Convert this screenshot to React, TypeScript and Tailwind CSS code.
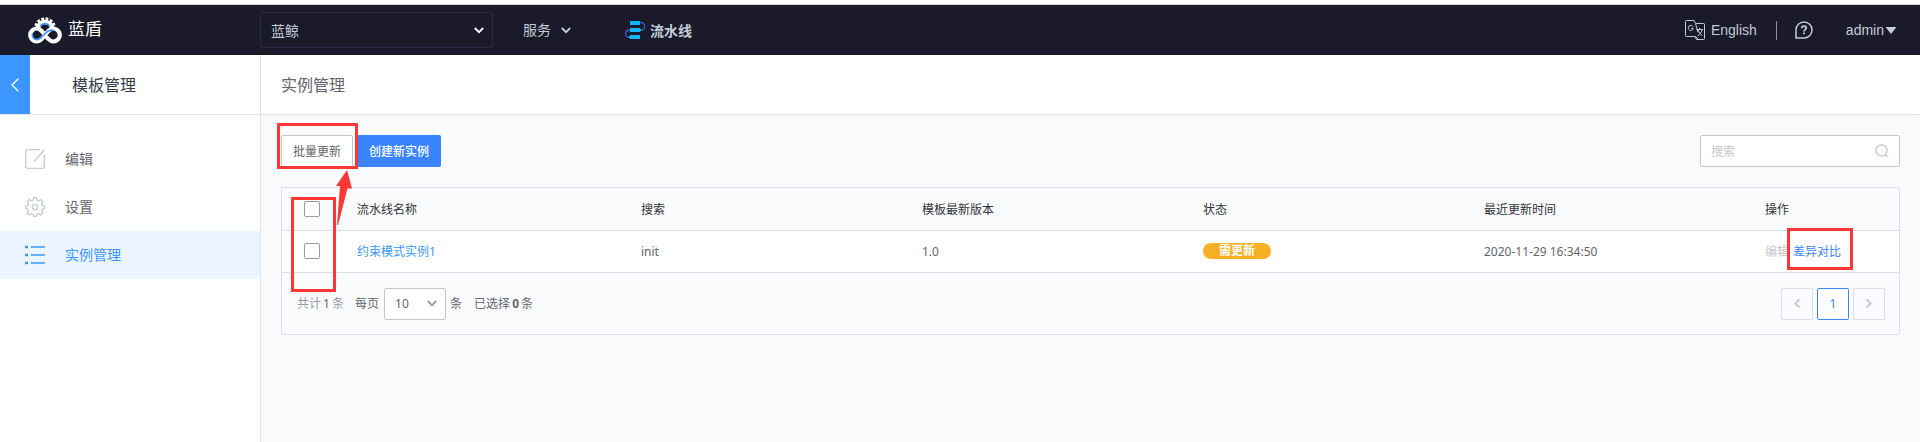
import React from "react";

const columns = ["流水线名称", "搜索", "模板最新版本", "状态", "最近更新时间", "操作"];
const grid = "grid grid-cols-[60px_284px_281px_281px_281px_281px_1fr]";

function Chevron({ className }: { className: string }) {
  return (
    <svg className={className} viewBox="0 0 10 7" fill="none" stroke="currentColor" strokeWidth="1.8">
      <path d="M0.8 1l4.2 4.2L9.2 1" />
    </svg>
  );
}

function Logo() {
  return (
    <svg className="h-[28px] w-[34px] shrink-0" viewBox="0 0 34 28" fill="none">
      <path d="M10 11.500A7.200 7.200 0 0 1 24 11.500" stroke="#fff" strokeWidth="4.400" />
      <path d="M8 10A9.300 9.300 0 0 1 26 10" stroke="#fff" strokeWidth="3.400" strokeDasharray="2.700 1.500" />
      <path d="M12.300 10A5.800 5.800 0 0 1 21.700 10" stroke="#3c96ff" strokeWidth="1.700" />
      <path
        d="M17 19C14 15 12 12.500 8.700 12.500A6.500 6.500 0 0 0 8.700 25.500C12 25.500 14 23 17 19C20 15 22 12.500 25.300 12.500A6.500 6.500 0 0 1 25.300 25.500C22.500 25.500 20.500 23.500 18 20.500"
        stroke="#fff"
        strokeWidth="4.200"
      />
      <path
        d="M4.500 17.500C3.800 21.500 6.300 23.600 8.800 23.600C12.500 23.600 14.500 20 17.500 17C20.300 14.200 23 13.600 26 14.500"
        stroke="#3c96ff"
        strokeWidth="1.700"
      />
    </svg>
  );
}

function Header() {
  return (
    <header className="flex h-[51px] items-center border-t border-[#d4d4d6] bg-[#1b1a2a] text-sm text-[#c3cdd7]">
      <div className="flex w-[260px] items-center pl-[28px] text-white">
        <Logo />
        <span className="ml-[6px] text-[17px] leading-[24px]">蓝盾</span>
      </div>
      <div className="flex h-[36px] w-[233px] items-center justify-between rounded-[2px] border border-[#2a2a42] pr-[8px] pl-[10px]">
        <span className="pt-px">蓝鲸</span>
        <Chevron className="h-[7px] w-[10px] text-white" />
      </div>
      <div className="ml-[30px] flex items-center">
        <span>服务</span>
        <Chevron className="ml-[10px] h-[7px] w-[10px]" />
      </div>
      <div className="ml-[54px] flex items-center font-bold">
        <svg className="mr-[5px] h-[20px] w-[20px]" viewBox="0 0 20 20" fill="none">
          <path d="M15 2.700h1a3.700 3.700 0 0 1 0 7.400h-1M5 10H4.300a3.700 3.700 0 0 0 0 7.400H5" stroke="#3a5fd0" strokeWidth="1.300" />
          <path d="M5 1h10v4H5zM5 8h10v4H5zM5 15h10v4H5z" fill="#0fb4ff" />
          <path d="M15 9.300h1v1.500h-1zM4 16.500h1V18H4z" fill="#38f2b0" />
        </svg>
        <span className="pt-px">流水线</span>
      </div>
      <div className="ml-auto flex items-center pr-[23px]">
        <svg className="h-[20px] w-[20px]" viewBox="0 0 20 20" fill="none" stroke="currentColor">
          <path d="M10 16.500H1.500Q.5 16.500.5 15.500V1.500Q.5.500 1.500.500H9L10.500 3.500H18.500Q19.500 3.500 19.500 4.500V18.500Q19.500 19.500 18.500 19.500H11.500L10 16.500M10.500 3.500L13 12.500M10.500 16.500L13 19" />
          <path d="M8 6.800A2.500 2.500 0 1 0 8.200 8.500H6.200M11.500 9.500h6.500M14.500 8v1.500M17 9.500c-.5 3-2 5-4.500 6.500M13 9.500c1 3 2.500 5 4.500 6" />
        </svg>
        <span className="ml-[6px]">English</span>
        <span className="ml-[19px] h-[19px] w-px bg-[#8b929c]" />
        <svg className="ml-[18px] h-[18px] w-[18px]" viewBox="0 0 18 18" fill="none" stroke="currentColor" strokeWidth="1.500">
          <path d="M1 17V9a8 8 0 1 1 8 8z" />
          <path d="M6.800 7.300C6.800 4.300 11.200 4.400 11.200 7c0 1.700-2.200 1.600-2.200 3.400M9 11.500v1.700" strokeWidth="1.800" />
        </svg>
        <span className="ml-[33px]">admin</span>
        <svg className="ml-[1px] h-[7px] w-[12px]" viewBox="0 0 12 7" fill="currentColor">
          <path d="M0.500 0h11L6 7z" />
        </svg>
      </div>
    </header>
  );
}

function NavItem({ label, active, children }: { label: string; active?: boolean; children: React.ReactNode }) {
  return (
    <li className={active ? "flex h-[48px] items-center bg-[#ebf4ff] pl-[25px] text-[#3c96ff]" : "flex h-[48px] items-center pl-[25px] text-[#63656e]"}>
      <svg
        className={active ? "mr-[20px] h-[20px] w-[20px]" : "mr-[20px] h-[20px] w-[20px] text-[#c3cdd7]"}
        viewBox="0 0 20 20"
        fill="none"
        stroke="currentColor"
        strokeWidth="1.300"
      >
        {children}
      </svg>
      {label}
    </li>
  );
}

function Sidebar() {
  return (
    <aside className="w-[261px] shrink-0 border-r border-[#dde4eb] bg-white">
      <div className="flex h-[60px] border-b border-[#dde4eb]">
        <div className="flex h-[59px] w-[30px] items-center justify-center bg-[#3c96ff] text-white">
          <svg className="h-[14px] w-[8px]" viewBox="0 0 8 14" fill="none" stroke="currentColor" strokeWidth="1.300">
            <path d="M7.300.7L1 7l6.300 6.300" />
          </svg>
        </div>
        <span className="ml-[42px] text-base leading-[60px] text-[#333c48]">模板管理</span>
      </div>
      <ul className="pt-[20px] text-sm">
        <NavItem label="编辑">
          <path d="M14.500.7H2.500Q.7.700.7 2.500v15q0 1.800 1.800 1.800h15q1.800 0 1.800-1.800V6M19.500.7L9 12.500" />
        </NavItem>
        <NavItem label="设置">
          <path d="M8.600.7h2.800l.5 2.300 1.900.8 2-1.300 2 2-1.300 2 .8 1.900 2.100.5v2.600l-2.100.5-.8 1.900 1.300 2-2 2-2-1.300-1.900.8-.5 1.900H8.600l-.5-1.900-1.900-.8-2 1.300-2-2 1.300-2-.8-1.900L.6 11.500V8.900l2.100-.5.800-1.900-1.300-2 2-2 2 1.300 1.900-.8z" />
          <circle cx="10" cy="10" r="2.700" />
        </NavItem>
        <NavItem label="实例管理" active>
          <path d="M6 2h14M6 10h14M6 18h14" />
          <path d="M0 2h3M0 10h3M0 18h3" strokeWidth="2.600" />
        </NavItem>
      </ul>
    </aside>
  );
}

function Checkbox() {
  return <span className="ml-[22px] block h-[16px] w-[16px] rounded-[2px] border border-[#979ba5] bg-white" />;
}

function PageButton({ children, active }: { children: React.ReactNode; active?: boolean }) {
  return (
    <span
      className={
        active
          ? "flex h-[32px] w-[32px] items-center justify-center rounded-[2px] border border-[#3a84ff] bg-white text-[#3a84ff]"
          : "flex h-[32px] w-[32px] items-center justify-center rounded-[2px] border border-[#dcdee5] text-[#c4c6cc]"
      }
    >
      {children}
    </span>
  );
}

function InstanceTable() {
  return (
    <section className="mt-[20px] h-[148px] rounded-[2px] border border-[#dcdee5] text-xs text-[#63656e]">
      <div className={`${grid} h-[43px] items-center border-b border-[#dcdee5] text-[#313238]`}>
        <span className="pb-px"><Checkbox /></span>
        {columns.map((c) => (
          <span key={c} className="pt-px pl-[15px]">{c}</span>
        ))}
      </div>
      <div className={`${grid} h-[42px] items-center border-b border-[#dcdee5] bg-white`}>
        <span className="pb-px"><Checkbox /></span>
        <span className="pl-[15px] text-[#3c96ff]">约束模式实例1</span>
        <span className="pl-[15px]">init</span>
        <span className="pl-[15px]">1.0</span>
        <span className="pb-px pl-[15px]">
          <span className="flex h-[16px] w-[68px] items-center justify-center rounded-full bg-[#f6b026] font-bold text-white">需更新</span>
        </span>
        <span className="pl-[15px]">2020-11-29 16:34:50</span>
        <span className="pl-[15px] text-[#c4c6cc]">
          编辑<span className="ml-[4px] text-[#3a84ff]">差异对比</span>
        </span>
      </div>
      <div className="flex h-[61px] items-center pr-[14px] pl-[15px]">
        <span className="text-[#979ba5]">共计</span>
        <span className="w-[11px] text-center">1</span>
        <span className="text-[#979ba5]">条</span>
        <span className="ml-[11px]">每页</span>
        <span className="mr-[4px] ml-[5px] flex h-[32px] w-[62px] items-center justify-between rounded-[2px] border border-[#c4c6cc] bg-white pr-[8px] pl-[10px]">
          10
          <Chevron className="h-[7px] w-[10px] text-[#979ba5]" />
        </span>
        <span>条</span>
        <span className="ml-[12px]">已选择</span>
        <span className="w-[11px] text-center font-bold">0</span>
        <span>条</span>
        <div className="ml-auto flex gap-[4px]">
          <PageButton>
            <Chevron className="h-[7px] w-[10px] rotate-90" />
          </PageButton>
          <PageButton active>1</PageButton>
          <PageButton>
            <Chevron className="h-[7px] w-[10px] -rotate-90" />
          </PageButton>
        </div>
      </div>
    </section>
  );
}

function Annotations() {
  return (
    <>
      <div className="absolute top-[123px] left-[277px] h-[46px] w-[81px] border-3 border-[#fd3636]" />
      <div className="absolute top-[197px] left-[291px] h-[95px] w-[45px] border-3 border-[#fd3636]" />
      <div className="absolute top-[228px] left-[1787px] h-[42px] w-[66px] border-3 border-[#fd3636]" />
      <svg className="absolute top-[170px] left-[334px] h-[56px] w-[20px]" viewBox="0 0 20 56" fill="#fd3636">
        <path d="M13 0L2 16h4L3 55h1L13.500 18.500H18z" />
      </svg>
    </>
  );
}

export default function App() {
  return (
    <div className="relative flex h-[442px] w-[1920px] flex-col overflow-hidden bg-white pt-[4px] font-['Liberation_Sans','Noto_Sans_CJK_SC',sans-serif]">
      <Header />
      <div className="flex flex-1 font-['Noto_Sans','Noto_Sans_CJK_SC',sans-serif]">
        <Sidebar />
        <main className="flex-1 bg-[#fafbfd]">
          <div className="h-[60px] border-b border-[#dde4eb] bg-white pl-[20px] text-base leading-[60px] text-[#63656e] shadow-[0_2px_5px_rgba(0,0,0,0.03)]">
            实例管理
          </div>
          <div className="px-[20px] pt-[20px]">
            <div className="flex h-[32px] items-center text-xs">
              <button className="h-[32px] w-[72px] rounded-[2px] border border-[#c4c6cc] bg-white pt-[2px] text-[#63656e]">批量更新</button>
              <button className="ml-[4px] h-[32px] w-[84px] rounded-[2px] bg-[#3a84ff] pt-[2px] font-medium text-white">创建新实例</button>
              <div className="ml-auto flex h-[32px] w-[200px] items-center justify-between rounded-[2px] border border-[#c4c6cc] bg-white pr-[10px] pl-[10px] text-[#c4c6cc]">
                <span className="pt-[2px]">搜索</span>
                <svg className="h-[14px] w-[14px]" viewBox="0 0 14 14" fill="none" stroke="currentColor" strokeWidth="1.300">
                  <circle cx="6.500" cy="6.500" r="5.600" />
                  <path d="M10.500 10.500l2.800 2.500" />
                </svg>
              </div>
            </div>
            <InstanceTable />
          </div>
        </main>
      </div>
      <Annotations />
    </div>
  );
}
